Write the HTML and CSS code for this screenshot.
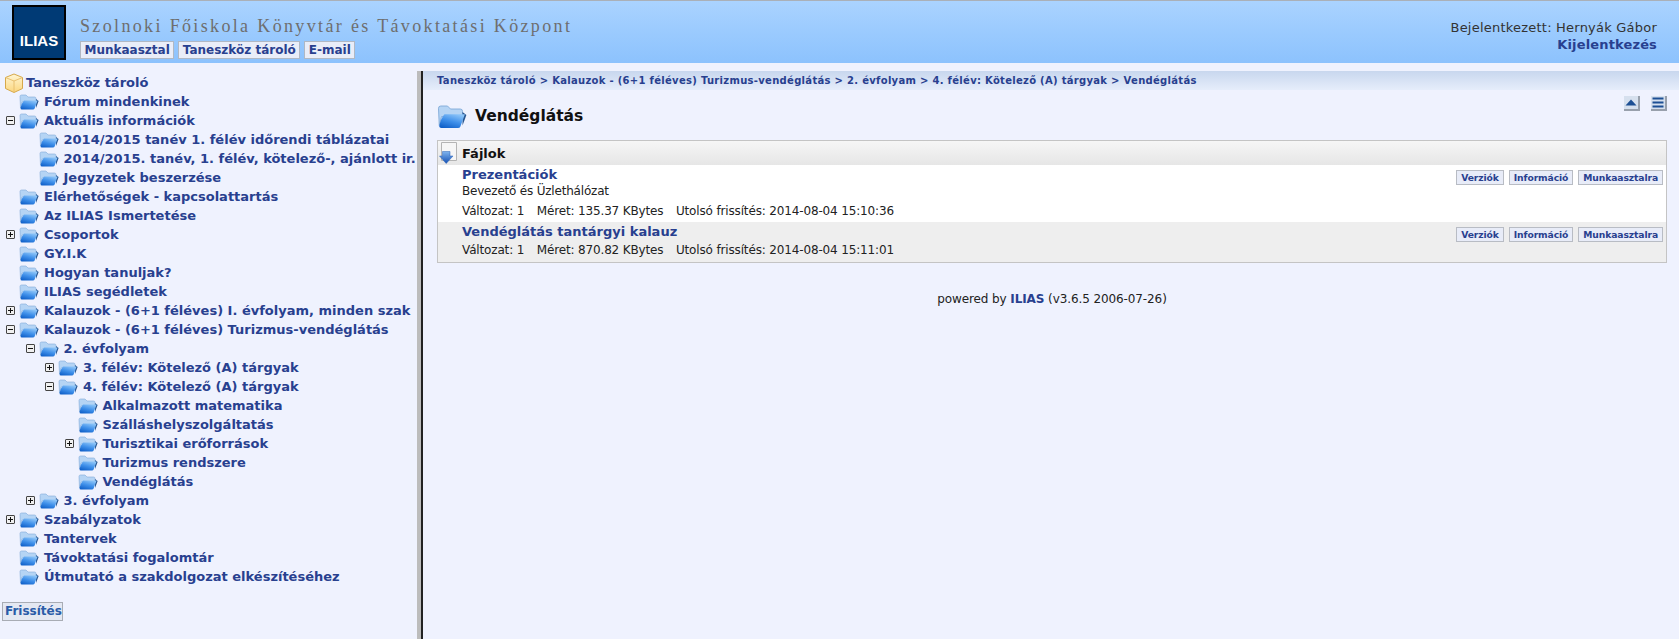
FILE: index.html
```html
<!DOCTYPE html>
<html lang="hu">
<head>
<meta charset="utf-8">
<title>Vendéglátás</title>
<link rel="stylesheet" href="styles.css">
</head>
<body>
<svg class="defs" width="0" height="0" aria-hidden="true">
  <defs>
    <linearGradient id="fg" x1="0.7" y1="0" x2="0.2" y2="1">
      <stop offset="0" stop-color="#8cc4f8"/><stop offset="0.5" stop-color="#3f90ea"/><stop offset="1" stop-color="#0f5fc8"/>
    </linearGradient>
    <linearGradient id="cube" x1="0" y1="0" x2="0" y2="1">
      <stop offset="0" stop-color="#fff6d4"/><stop offset="1" stop-color="#fbd67e"/>
    </linearGradient>
    <linearGradient id="arrow" x1="0" y1="0" x2="0" y2="1">
      <stop offset="0" stop-color="#7fb4ee"/><stop offset="1" stop-color="#1450b4"/>
    </linearGradient>
    <symbol id="folder" viewBox="0 0 20 18">
      <path d="M1 3.5 Q1 2 2.5 2 H7 L9 4 H15.5 Q17 4 17 5.5 V9 H3 L1.5 15 Z" fill="#b5d4f4" stroke="#7fa9d8" stroke-width=".6"/>
      <path d="M17 6 L19.6 8 L17 15 Z" fill="#27558f"/>
      <path d="M5 7.5 H18.6 L15.6 15.6 Q15.2 16.6 14 16.6 H3 Q1.2 16.6 1.6 15 Q2.6 10 5 7.5 Z" fill="url(#fg)"/>
    </symbol>
  </defs>
</svg>

<header class="top">
  <div class="logo"><span>ILIAS</span></div>
  <div class="brand">
    <div class="inst">Szolnoki Főiskola Könyvtár és Távoktatási Központ</div>
    <nav class="mainnav">
      <a class="navbtn" href="#">Munkaasztal</a>
      <a class="navbtn" href="#">Taneszköz tároló</a>
      <a class="navbtn" href="#">E-mail</a>
    </nav>
  </div>
  <div class="user">
    <div>Bejelentkezett: Hernyák Gábor</div>
    <a class="logout" href="#">Kijelentkezés</a>
  </div>
</header>

<main class="frames">
  <aside class="side">
    <div class="root">
      <svg class="cube" viewBox="0 0 22 22" width="22" height="22">
        <path d="M11 2 L19.5 5.5 V16.5 L11 20.5 L2.5 16.5 V5.5 Z" fill="url(#cube)" stroke="#d6a84a" stroke-width="1" stroke-linejoin="round"/>
        <path d="M2.5 5.5 L11 9 L19.5 5.5 M11 9 V20.5" fill="none" stroke="#e8c070" stroke-width="1"/>
      </svg>
      <a href="#">Taneszköz tároló</a>
    </div>
    <ul class="tree">
      <li><div class="node"><i class="exp"></i><svg class="fold"><use href="#folder"/></svg><a href="#">Fórum mindenkinek</a></div></li>
      <li><div class="node"><i class="exp minus"></i><svg class="fold"><use href="#folder"/></svg><a href="#">Aktuális információk</a></div>
        <ul>
          <li><div class="node"><i class="exp"></i><svg class="fold"><use href="#folder"/></svg><a href="#">2014/2015 tanév 1. félév időrendi táblázatai</a></div></li>
          <li><div class="node"><i class="exp"></i><svg class="fold"><use href="#folder"/></svg><a href="#">2014/2015. tanév, 1. félév, kötelező-, ajánlott ir.</a></div></li>
          <li><div class="node"><i class="exp"></i><svg class="fold"><use href="#folder"/></svg><a href="#">Jegyzetek beszerzése</a></div></li>
        </ul>
      </li>
      <li><div class="node"><i class="exp"></i><svg class="fold"><use href="#folder"/></svg><a href="#">Elérhetőségek - kapcsolattartás</a></div></li>
      <li><div class="node"><i class="exp"></i><svg class="fold"><use href="#folder"/></svg><a href="#">Az ILIAS Ismertetése</a></div></li>
      <li><div class="node"><i class="exp plus"></i><svg class="fold"><use href="#folder"/></svg><a href="#">Csoportok</a></div></li>
      <li><div class="node"><i class="exp"></i><svg class="fold"><use href="#folder"/></svg><a href="#">GY.I.K</a></div></li>
      <li><div class="node"><i class="exp"></i><svg class="fold"><use href="#folder"/></svg><a href="#">Hogyan tanuljak?</a></div></li>
      <li><div class="node"><i class="exp"></i><svg class="fold"><use href="#folder"/></svg><a href="#">ILIAS segédletek</a></div></li>
      <li><div class="node"><i class="exp plus"></i><svg class="fold"><use href="#folder"/></svg><a href="#">Kalauzok - (6+1 féléves) I. évfolyam, minden szak</a></div></li>
      <li><div class="node"><i class="exp minus"></i><svg class="fold"><use href="#folder"/></svg><a href="#">Kalauzok - (6+1 féléves) Turizmus-vendéglátás</a></div>
        <ul>
          <li><div class="node"><i class="exp minus"></i><svg class="fold"><use href="#folder"/></svg><a href="#">2. évfolyam</a></div>
            <ul>
              <li><div class="node"><i class="exp plus"></i><svg class="fold"><use href="#folder"/></svg><a href="#">3. félév: Kötelező (A) tárgyak</a></div></li>
              <li><div class="node"><i class="exp minus"></i><svg class="fold"><use href="#folder"/></svg><a href="#">4. félév: Kötelező (A) tárgyak</a></div>
                <ul>
                  <li><div class="node"><i class="exp"></i><svg class="fold"><use href="#folder"/></svg><a href="#">Alkalmazott matematika</a></div></li>
                  <li><div class="node"><i class="exp"></i><svg class="fold"><use href="#folder"/></svg><a href="#">Szálláshelyszolgáltatás</a></div></li>
                  <li><div class="node"><i class="exp plus"></i><svg class="fold"><use href="#folder"/></svg><a href="#">Turisztikai erőforrások</a></div></li>
                  <li><div class="node"><i class="exp"></i><svg class="fold"><use href="#folder"/></svg><a href="#">Turizmus rendszere</a></div></li>
                  <li><div class="node"><i class="exp"></i><svg class="fold"><use href="#folder"/></svg><a href="#">Vendéglátás</a></div></li>
                </ul>
              </li>
            </ul>
          </li>
          <li><div class="node"><i class="exp plus"></i><svg class="fold"><use href="#folder"/></svg><a href="#">3. évfolyam</a></div></li>
        </ul>
      </li>
      <li><div class="node"><i class="exp plus"></i><svg class="fold"><use href="#folder"/></svg><a href="#">Szabályzatok</a></div></li>
      <li><div class="node"><i class="exp"></i><svg class="fold"><use href="#folder"/></svg><a href="#">Tantervek</a></div></li>
      <li><div class="node"><i class="exp"></i><svg class="fold"><use href="#folder"/></svg><a href="#">Távoktatási fogalomtár</a></div></li>
      <li><div class="node"><i class="exp"></i><svg class="fold"><use href="#folder"/></svg><a href="#">Útmutató a szakdolgozat elkészítéséhez</a></div></li>
    </ul>
    <button class="refresh" type="button">Frissítés</button>
  </aside>

  <section class="content">
    <div class="crumbs">
      <a href="#">Taneszköz tároló</a> &gt; <a href="#">Kalauzok - (6+1 féléves) Turizmus-vendéglátás</a> &gt; <a href="#">2. évfolyam</a> &gt; <a href="#">4. félév: Kötelező (A) tárgyak</a> &gt; <a href="#">Vendéglátás</a>
    </div>
    <div class="body">
      <div class="titlebar">
        <svg class="bigfold"><use href="#folder"/></svg>
        <h1>Vendéglátás</h1>
        <div class="tools">
          <span class="tool"><svg viewBox="0 0 14 13" width="14" height="13"><path d="M1.5 9.5 L7 3.5 L12.5 9.5 Z" fill="#1d4f94"/></svg></span>
          <span class="tool"><svg viewBox="0 0 14 13" width="14" height="13"><path d="M1.5 1.5 H12.5 V3.5 H1.5 Z M1.5 5.5 H12.5 V7.5 H1.5 Z M1.5 9.5 H12.5 V11.5 H1.5 Z" fill="#1d4f94"/></svg></span>
        </div>
      </div>

      <div class="panel">
        <div class="panelhead">
          <svg class="dl" viewBox="0 0 19 22" width="19" height="22">
            <path d="M2.5 .5 H17.5 V18.5 H2.5 Z" fill="#f6f6f6" stroke="#b4b4b4"/>
            <path d="M3.5 9.5 H11 V14 H14 L7.2 21.5 L.5 14 H3.5 Z" fill="url(#arrow)" stroke="#2a62b8" stroke-width=".5"/>
          </svg>
          <h2>Fájlok</h2>
        </div>
        <div class="item">
          <div class="iteminfo">
            <a class="itemtitle" href="#">Prezentációk</a>
            <div class="desc">Bevezető és Üzlethálózat</div>
            <div class="props"><span>Változat: 1</span><span>Méret: 135.37 KBytes</span><span>Utolsó frissítés: 2014-08-04 15:10:36</span></div>
          </div>
          <div class="actions"><a href="#">Verziók</a><a href="#">Információ</a><a href="#">Munkaasztalra</a></div>
        </div>
        <div class="item alt">
          <div class="iteminfo">
            <a class="itemtitle" href="#">Vendéglátás tantárgyi kalauz</a>
            <div class="props"><span>Változat: 1</span><span>Méret: 870.82 KBytes</span><span>Utolsó frissítés: 2014-08-04 15:11:01</span></div>
          </div>
          <div class="actions"><a href="#">Verziók</a><a href="#">Információ</a><a href="#">Munkaasztalra</a></div>
        </div>
      </div>

      <footer class="powered">powered by <a href="#">ILIAS</a> (v3.6.5 2006-07-26)</footer>
    </div>
  </section>
</main>
</body>
</html>
```

FILE: styles.css
```css
* { box-sizing: border-box; }
html, body { margin: 0; height: 100%; }
body {
  height: 639px;
  overflow: hidden;
  background: #eff2fe;
  font-family: "DejaVu Sans", Verdana, sans-serif;
  font-size: 12px;
  color: #222;
  display: flex;
  flex-direction: column;
}
a { color: #28408f; text-decoration: none; }
.defs { position: absolute; }

.top {
  height: 63px;
  flex: none;
  display: flex;
  border-top: 1px solid #aab0b8;
  background: linear-gradient(#aad3ff, #8cc2fd);
  padding: 4px 22px 0 12px;
}
.logo {
  width: 54px;
  height: 55px;
  background: #003a75;
  border: 2px solid #000;
  display: flex;
  align-items: flex-end;
  justify-content: center;
  padding-bottom: 9px;
}
.logo span { color: #fff; font: bold 15px "Liberation Sans", Arial, sans-serif; }
.brand { margin-left: 14px; flex: 1; }
.inst {
  font: 18px/24px "Liberation Serif", "Times New Roman", serif;
  letter-spacing: 2.35px;
  color: #6e6e6e;
  margin-top: 9px;
}
.mainnav { display: flex; gap: 4px; margin-top: 3px; }
.navbtn {
  display: block;
  height: 18px;
  line-height: 16px;
  padding: 0 3.5px;
  background: #e9edf8;
  border: 1px solid #b0b8c4;
  font-weight: bold;
  font-size: 12px;
}
.user { text-align: right; font-size: 13px; line-height: 17px; padding-top: 14px; color: #333; letter-spacing: .22px; }
.logout { font-weight: bold; display: block; letter-spacing: .15px; }

.frames { flex: 1; display: flex; padding-top: 8px; min-height: 0; }
.side {
  width: 423px;
  flex: none;
  border-right: 2px solid #222;
  overflow: hidden;
  padding-top: 2px;
  box-shadow: inset -4px 0 0 #bcbcbc;
}
.root, .node {
  display: flex;
  align-items: center;
  height: 19px;
  white-space: nowrap;
  font-weight: bold;
  font-size: 13px;
}
.root { padding-left: 3px; }
.cube { flex: none; margin-right: 1px; }
.tree, .tree ul { list-style: none; margin: 0; padding: 0; }
.tree ul { padding-left: 19.5px; }
.node { padding-left: 6px; }
.exp { flex: none; width: 9px; height: 9px; position: relative; margin-right: 4px; }
.minus, .plus { border: 1px solid #444; background: #f0f0f0; border-radius: 1px; }
.minus::before, .plus::before {
  content: ""; position: absolute; left: 1px; top: 3px; width: 5px; height: 1px; background: #111;
}
.plus::after {
  content: ""; position: absolute; left: 3px; top: 1px; width: 1px; height: 5px; background: #111;
}
.fold { flex: none; width: 20px; height: 18px; margin-right: 5px; }
.refresh {
  display: block;
  margin: 16px 0 0 2px;
  width: 61px;
  height: 19px;
  padding: 0 2px;
  background: #e4e8f2;
  border: 1px solid #a8acb4;
  color: #2a5ca8;
  font: bold 12px/17px "DejaVu Sans", Verdana, sans-serif;
  text-align: left;
}

.content { flex: 1; min-width: 0; }
.crumbs {
  height: 19px;
  line-height: 19px;
  padding-left: 14px;
  background: linear-gradient(#c8d7ee, #e6edfb);
  color: #28408f;
  font-size: 10px;
  font-weight: bold;
  letter-spacing: .3px;
}
.body { padding: 0 12px 0 14px; }
.titlebar { position: relative; display: flex; align-items: center; height: 50px; }
.bigfold { width: 30px; height: 27px; margin-top: 2px; margin-right: 8px; }
h1 { margin: 0; font-size: 15.5px; font-weight: bold; color: #111; margin-top: 1px; }
.tools { position: absolute; top: 6px; right: 0; display: flex; gap: 11px; }
.tool {
  display: block;
  width: 16px;
  height: 15px;
  background: #d6e0ee;
  border-right: 2px solid #98a0ac;
  border-bottom: 2px solid #98a0ac;
}
.tool svg { display: block; }

.panel { border: 1px solid #c4c4c4; background: #fff; }
.panelhead {
  height: 24px;
  display: flex;
  align-items: center;
  background: linear-gradient(#f6f6f6, #e6e6e6);
  padding-left: 1px;
}
.dl { flex: none; margin-right: 4px; }
h2 { margin: 0; font-size: 13px; font-weight: bold; color: #111; }
.item { display: flex; justify-content: space-between; padding: 3px 3px 0 24px; height: 57px; }
.item.alt { background: #eee; height: 40px; }
.itemtitle { display: block; font-size: 13px; font-weight: bold; line-height: 13px; }
.desc { font-size: 12px; line-height: 15px; margin-top: 3px; letter-spacing: -.2px; }
.props { display: flex; gap: 12.5px; margin-top: 5px; line-height: 15px; letter-spacing: -.15px; }
.actions { display: flex; gap: 5px; margin-top: 2px; height: 15px; }
.actions a {
  display: block;
  height: 15px;
  line-height: 13px;
  padding: 0 4px;
  background: #e8ecf8;
  border: 1px solid #b8bcc4;
  font-size: 9.2px;
  font-weight: bold;
  letter-spacing: -.1px;
}
.powered { text-align: center; margin-top: 29px; line-height: 15px; letter-spacing: -.1px; }
.powered a { font-weight: bold; }
```
